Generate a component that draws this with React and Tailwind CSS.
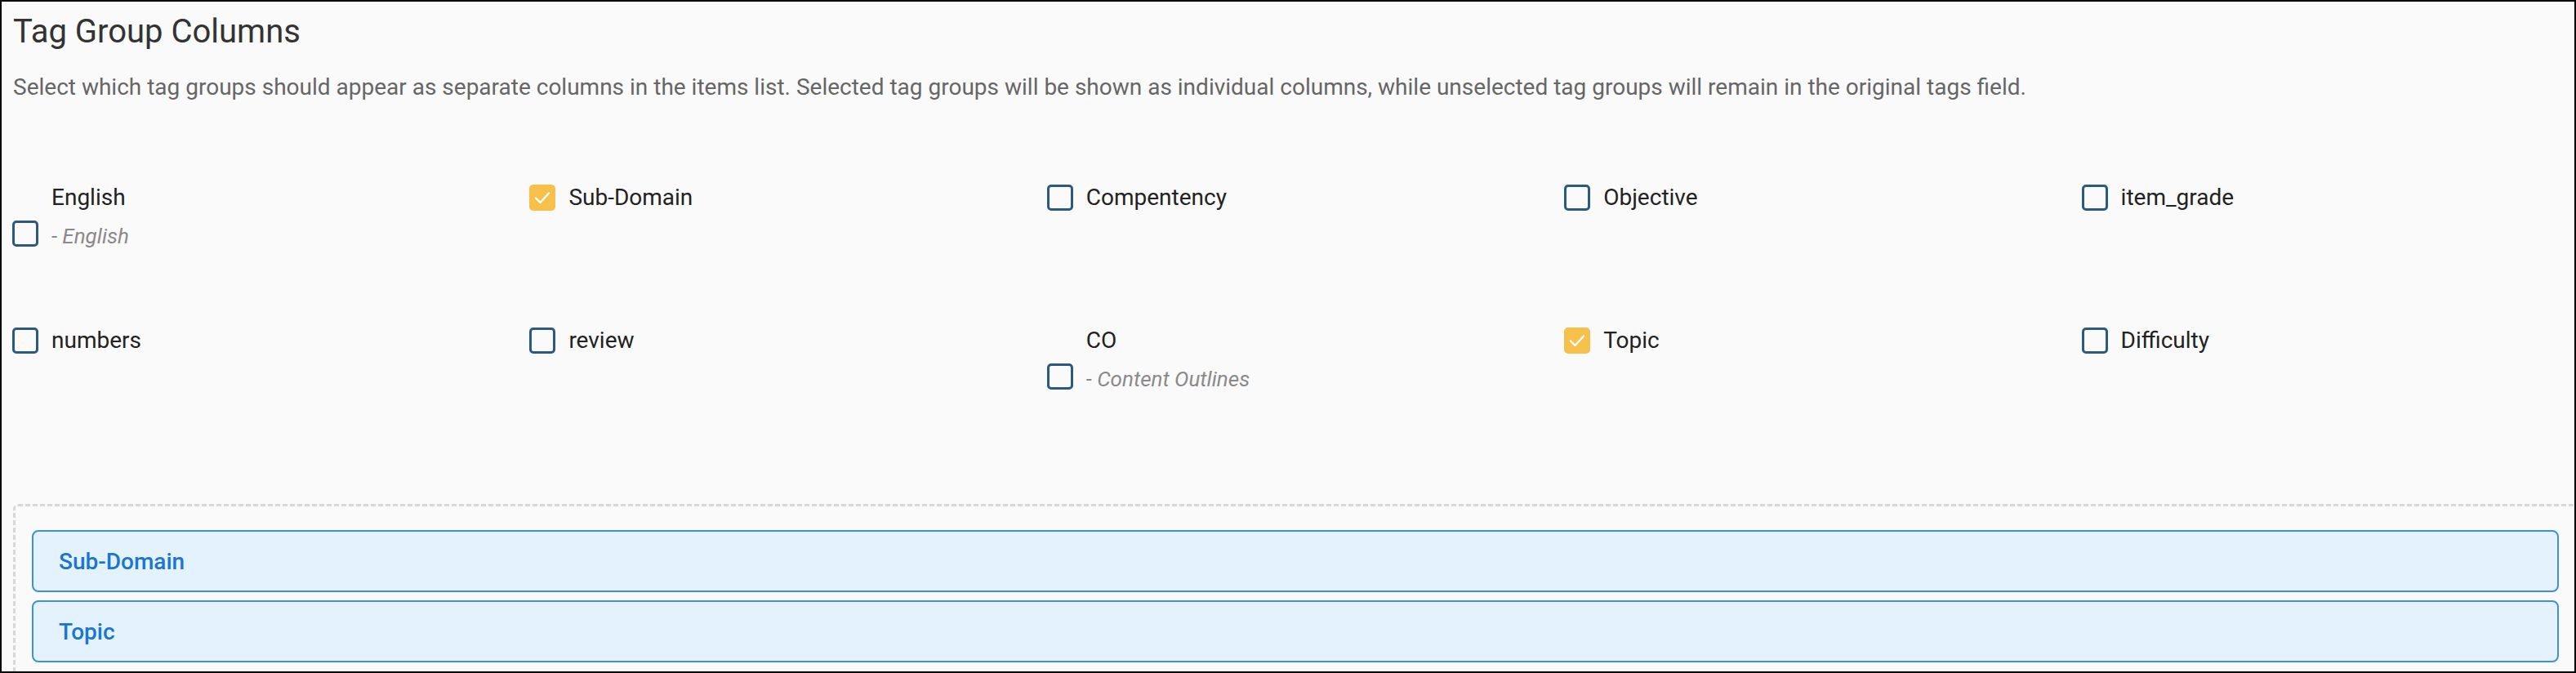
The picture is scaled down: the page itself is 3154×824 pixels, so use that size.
import React from "react";

const groups = [
  { name: "English", note: "- English", checked: false },
  { name: "Sub-Domain", checked: true },
  { name: "Compentency", checked: false },
  { name: "Objective", checked: false },
  { name: "item_grade", checked: false },
  { name: "numbers", checked: false },
  { name: "review", checked: false },
  { name: "CO", note: "- Content Outlines", checked: false },
  { name: "Topic", checked: true },
  { name: "Difficulty", checked: false },
];

function Box({ checked }) {
  if (checked) {
    return (
      <span className="flex h-[32px] w-[32px] shrink-0 items-center justify-center rounded-[5px] bg-[#f6c04a]">
        <svg width="32" height="32" viewBox="0 0 32 32" fill="none">
          <path
            d="M8 16.5 L13.5 22 L24 10.5"
            stroke="#ffffff"
            strokeWidth="2.4"
            strokeLinecap="round"
            strokeLinejoin="round"
          />
        </svg>
      </span>
    );
  }
  return (
    <span className="block h-[32px] w-[32px] shrink-0 rounded-[5px] border-[3px] border-[#2b5a7e] bg-transparent" />
  );
}

function GroupOption({ name, note, checked }) {
  if (note) {
    return (
      <label className="flex items-end gap-4">
        <Box checked={checked} />
        <div>
          <div className="text-[28px] leading-[40px] text-[#222222]">{name}</div>
          <div className="mt-[15px] text-[26px] leading-[25px] italic text-[#8a8a8a]">{note}</div>
        </div>
      </label>
    );
  }
  return (
    <label className="flex items-center gap-4">
      <Box checked={checked} />
      <div className="text-[28px] leading-[40px] text-[#222222]">{name}</div>
    </label>
  );
}

export default function App() {
  const selected = groups.filter((g) => g.checked);
  return (
    <div
      className="h-[824px] w-[3154px] overflow-hidden border-2 border-black bg-[#fafafa] pl-[14px] pt-[13px]"
      style={{ fontFamily: "Roboto, 'Noto Sans', Arial, sans-serif" }}
    >
      <h2 className="text-[40px] leading-[48px] font-normal text-[#333333]">Tag Group Columns</h2>
      <p className="mt-[24px] text-[28px] leading-[40px] text-[#666666]">
        Select which tag groups should appear as separate columns in the items list. Selected tag groups will be shown as individual columns, while unselected tag groups will remain in the original tags field.
      </p>

      <div className="-ml-[1px] mt-[95px] grid w-[3119px] grid-cols-5 items-start gap-x-[48px] gap-y-[95px]">
        {groups.map((g) => (
          <GroupOption key={g.name} {...g} />
        ))}
      </div>

      <div className="mt-[140px] w-[3140px] rounded-[6px] border-[3px] border-dashed border-[#d8d8d8] px-[20px] pt-[29px] pb-[20px]">
        <div className="flex flex-col gap-[10px]">
          {selected.map((g) => (
            <div
              key={g.name}
              className="rounded-[8px] border-2 border-[#3d91d8] bg-[#e3f2fd] pl-[31px] pt-[17px] pb-[15px] text-[28px] leading-[40px] font-medium text-[#1976d2]"
            >
              {g.name}
            </div>
          ))}
        </div>
      </div>
    </div>
  );
}
